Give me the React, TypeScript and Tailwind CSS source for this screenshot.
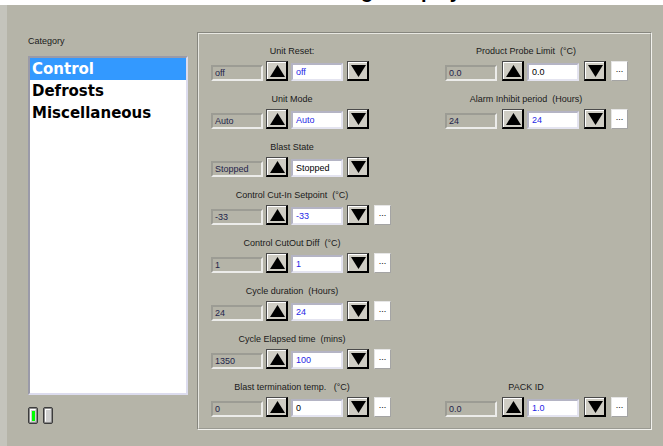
import React from "react";

type Field = {
  label: string;
  current: string;
  value: string;
  blue?: boolean;
  dots?: boolean;
};

const leftFields: Field[] = [
  { label: "Unit Reset:", current: "off", value: "off", blue: true },
  { label: "Unit Mode", current: "Auto", value: "Auto", blue: true },
  { label: "Blast State", current: "Stopped", value: "Stopped" },
  { label: "Control Cut-In Setpoint  (°C)", current: "-33", value: "-33", blue: true, dots: true },
  { label: "Control CutOut Diff  (°C)", current: "1", value: "1", blue: true, dots: true },
  { label: "Cycle duration  (Hours)", current: "24", value: "24", blue: true, dots: true },
  { label: "Cycle Elapsed time  (mins)", current: "1350", value: "100", blue: true, dots: true },
  { label: "Blast termination temp.   (°C)", current: "0", value: "0", dots: true },
];

const probeField: Field = { label: "Product Probe Limit  (°C)", current: "0.0", value: "0.0", dots: true };
const alarmField: Field = { label: "Alarm Inhibit period  (Hours)", current: "24", value: "24", blue: true, dots: true };
const packField: Field = { label: "PACK ID", current: "0.0", value: "1.0", blue: true, dots: true };

const categories = ["Control", "Defrosts", "Miscellaneous"];

function SpinButton({ dir }: { dir: "up" | "down" }) {
  return (
    <div className="w-[22px] h-[20px] border border-[#4a4a4a] border-b-2 border-r-2 border-b-black border-r-black bg-[#cfcdc4]">
      <div className="w-full h-full border-t border-l border-white flex items-center justify-center">
        <svg width="15" height="12" viewBox="0 0 15 12">
          <polygon points={dir === "up" ? "7.5,0 15,12 0,12" : "0,0 15,0 7.5,12"} fill="#000" />
        </svg>
      </div>
    </div>
  );
}

function FieldRow({ field, wide }: { field: Field; wide?: boolean }) {
  return (
    <div className="flex flex-col">
      <div className="w-[162px] text-center text-[9px] leading-[12px] text-[#1a1a1a] whitespace-pre mb-[4px]">
        {field.label}
      </div>
      <div className="flex items-end h-[20px]">
        <div className="w-[52px] h-[16px] border-2 border-t-[#9c9c94] border-l-[#9c9c94] border-b-[#ececea] border-r-[#ececea] bg-[#b5b4a8] text-[9px] leading-[12px] pl-[2px] text-[#24244a]">
          {field.current}
        </div>
        <div className={wide ? "ml-[5px]" : "ml-[3px]"}>
          <SpinButton dir="up" />
        </div>
        <div
          className={`ml-[3px] w-[52px] h-[18px] bg-white border-2 border-t-[#b4b4c4] border-l-[#b4b4c4] border-b-[#e4e4f0] border-r-[#e4e4f0] text-[9px] leading-[14px] pl-[3px] ${
            field.blue ? "text-[#1f1fe6]" : "text-black"
          }`}
        >
          {field.value}
        </div>
        <div className={wide ? "ml-[5px]" : "ml-[4px]"}>
          <SpinButton dir="down" />
        </div>
        {field.dots && (
          <div className="ml-[5px] w-[17px] h-[20px] bg-white border border-[#e6e6e6] border-b-[#a4a4a4] border-r-[#a4a4a4] text-[9px] leading-[14px] text-center text-black">
            ...
          </div>
        )}
      </div>
    </div>
  );
}

function Led({ on }: { on?: boolean }) {
  return (
    <div className="w-[10px] h-[17px] rounded-[2px] border border-[#3c3c3c] bg-[#8c8c8c] p-[1px]">
      <div className="w-full h-full rounded-[1px] border-t border-l border-white bg-[#cfcfcf] p-[1px]">
        {on && <div className="w-full h-full bg-[#00ff00]" />}
      </div>
    </div>
  );
}

export default function App() {
  return (
    <div className="w-[663px] h-[446px] overflow-hidden bg-white flex flex-col font-['Liberation_Sans',Arial,sans-serif]">
      {/* window title, mostly scrolled off the top */}
      <div className="h-[5px] overflow-hidden shrink-0">
        <div className="-mt-[20px] pl-[62px] text-[20px] leading-[22px] font-bold text-black whitespace-nowrap">
          Blast Chiller Unit Control Settings Display
        </div>
      </div>

      <div className="flex flex-1 min-h-0">
        <div className="w-[7px] bg-[#c4c4bc]" />
        <div className="flex-1 bg-[#b5b4a8] flex pl-[21px] pt-[27px]">
          {/* category list */}
          <div className="w-[160px] flex flex-col">
            <div className="mt-[3px] h-[13px] text-[9px] leading-[13px] text-[#1a1a1a]">Category</div>
            <div className="mt-[8px] h-[339px] bg-white border-2 border-t-[#9a9aa8] border-l-[#9a9aa8] border-b-[#dcdcee] border-r-[#dcdcee] font-['DejaVu_Sans',sans-serif] font-bold text-[15px]">
              {categories.map((c, i) => (
                <div
                  key={c}
                  className={`h-[22px] leading-[22px] pl-[2px] ${i === 0 ? "bg-[#3399ff] text-white" : "text-black"}`}
                >
                  {c}
                </div>
              ))}
            </div>
            <div className="mt-[12px] flex gap-[5px]">
              <Led on />
              <Led />
            </div>
          </div>

          {/* settings group */}
          <div className="ml-[9px] w-[455px] h-[398px] border border-t-[#86867e] border-l-[#86867e] border-b-[#f2f2ee] border-r-[#f2f2ee]">
            <div className="w-full h-full border border-t-[#e8e8e2] border-l-[#e8e8e2] border-b-[#9a9a92] border-r-[#9a9a92] pl-[12px] pt-[11px]">
              <div className="grid grid-cols-[181px_183px] gap-x-[53px]">
                <div className="flex flex-col gap-[12px]">
                  {leftFields.map((f) => (
                    <FieldRow key={f.label} field={f} />
                  ))}
                </div>
                <div className="flex flex-col justify-between">
                  <div className="flex flex-col gap-[12px]">
                    <FieldRow field={probeField} wide />
                    <FieldRow field={alarmField} wide />
                  </div>
                  <FieldRow field={packField} wide />
                </div>
              </div>
            </div>
          </div>
        </div>
      </div>
    </div>
  );
}
